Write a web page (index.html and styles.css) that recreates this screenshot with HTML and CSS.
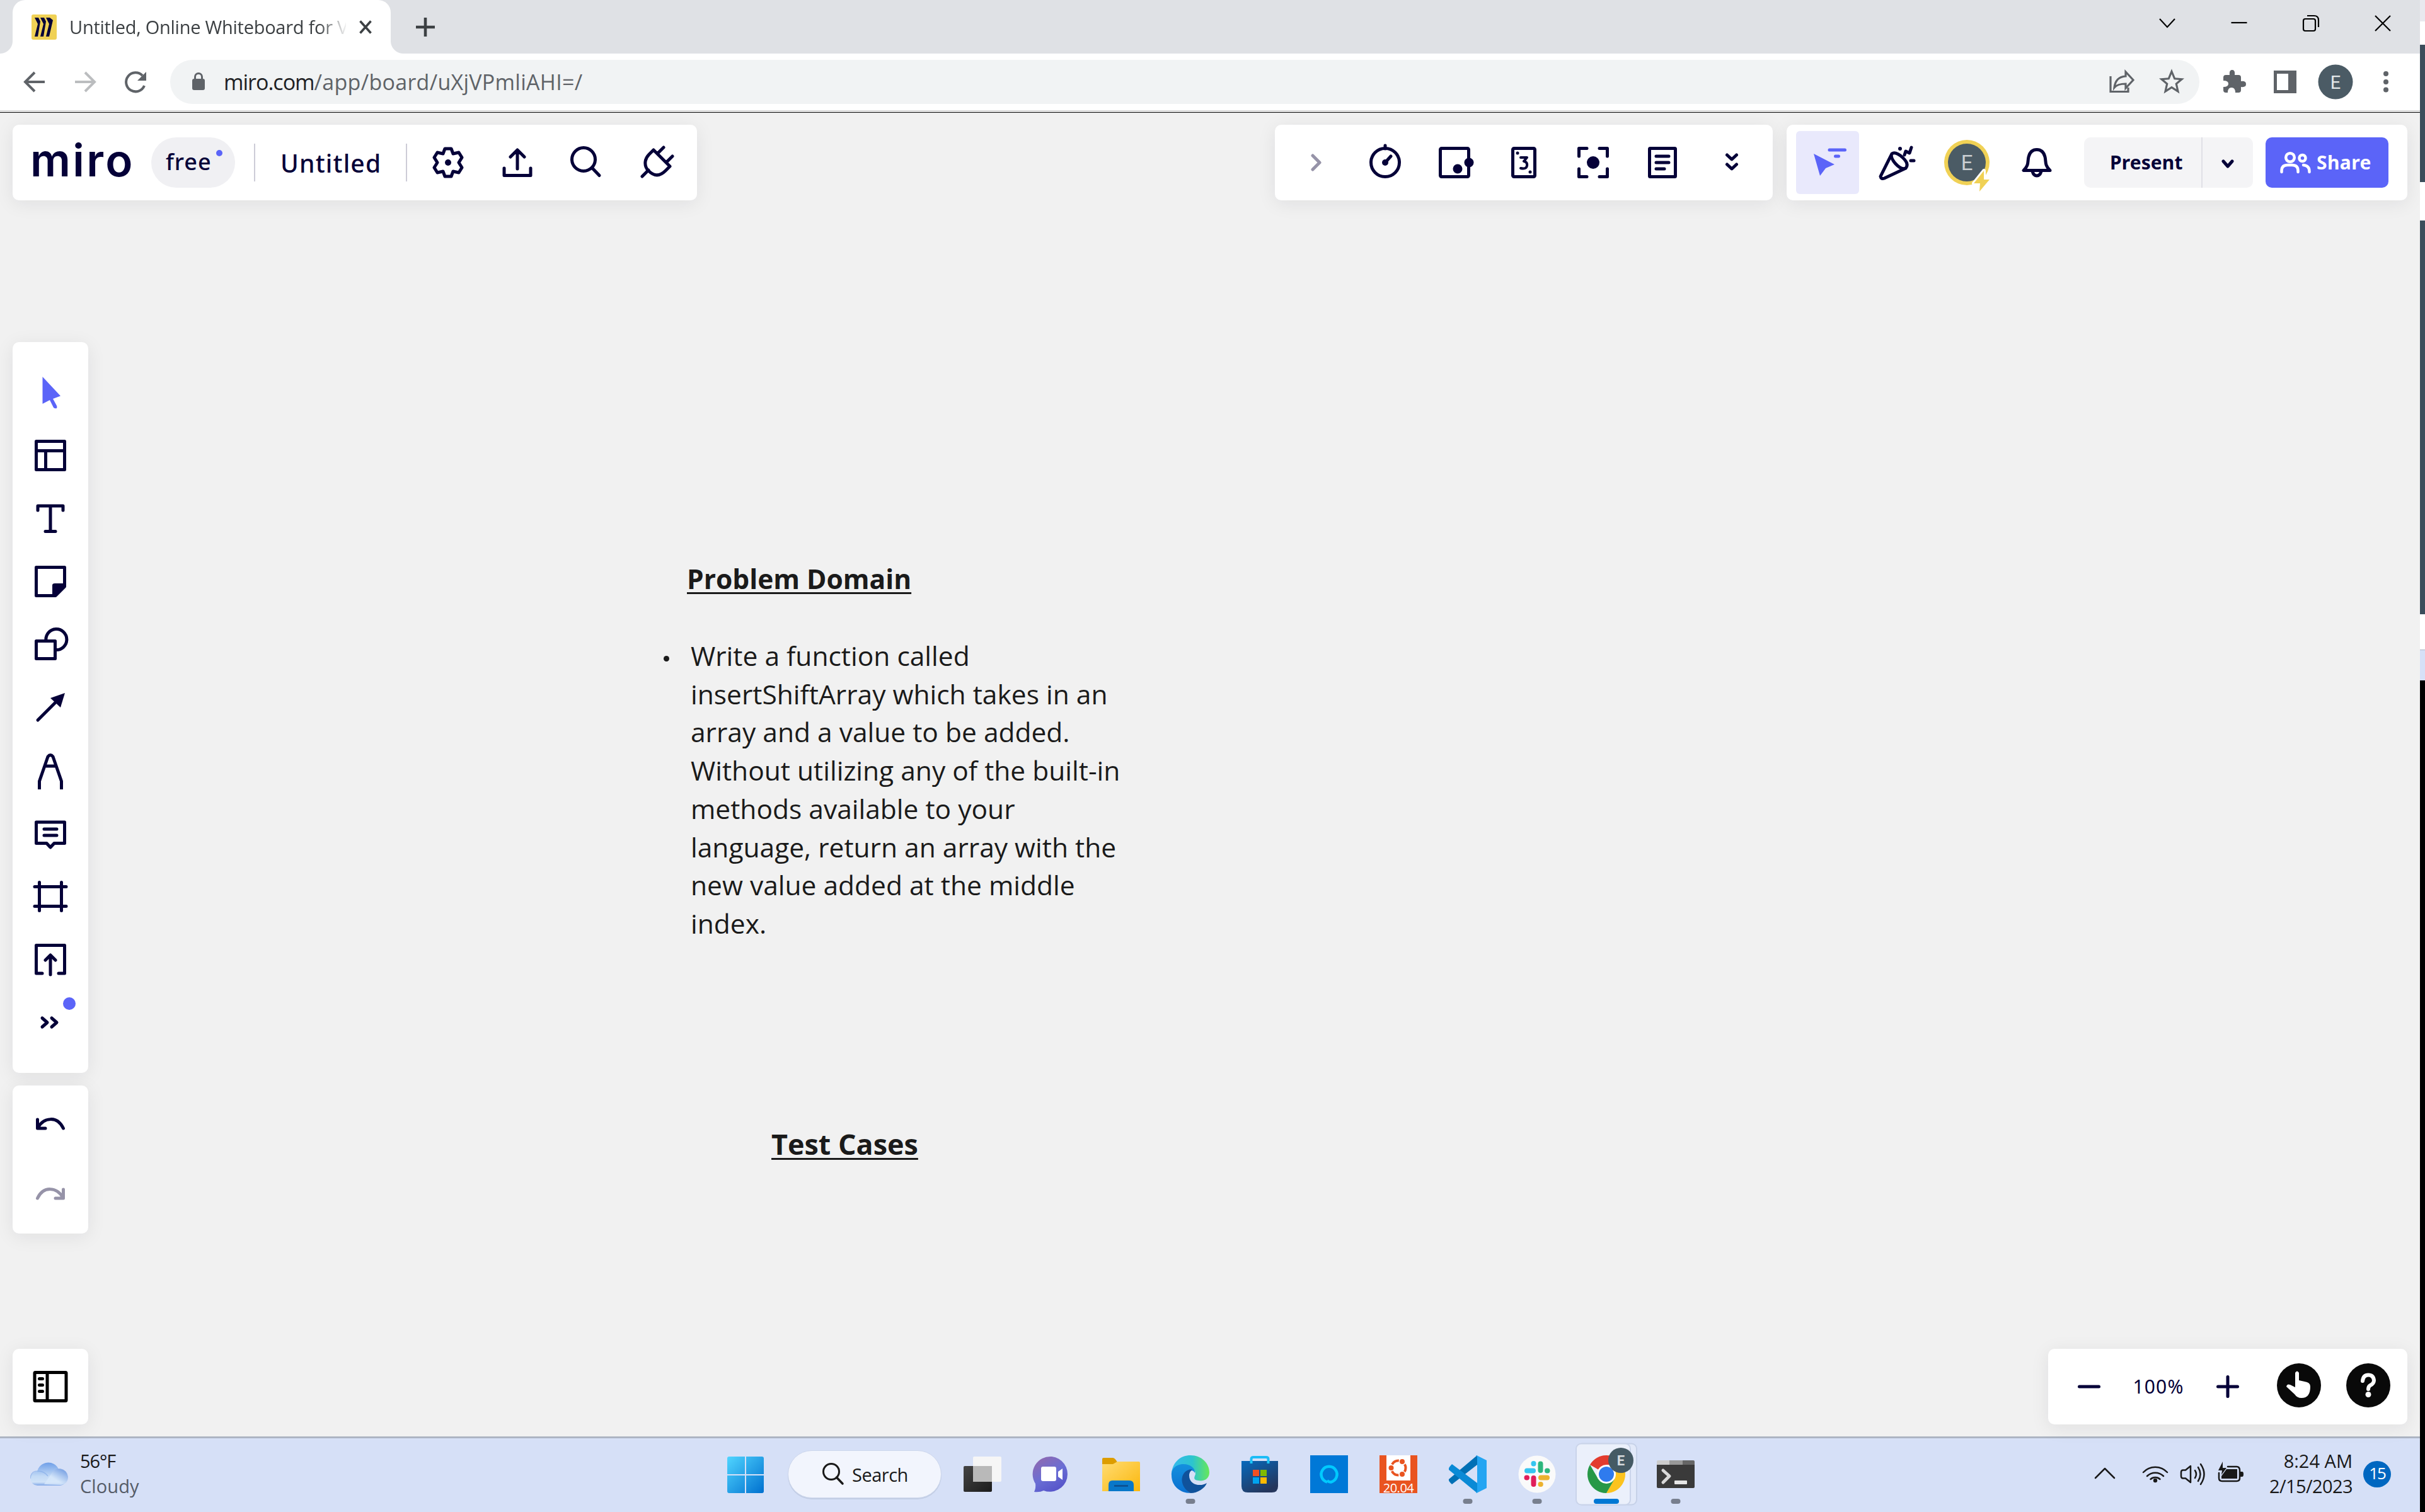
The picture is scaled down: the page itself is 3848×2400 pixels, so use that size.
FILE: index.html
```
<!DOCTYPE html>
<html lang="en">
<head>
<meta charset="utf-8">
<title>Untitled, Online Whiteboard for Visual Collaboration</title>
<link rel="stylesheet" href="styles.css">
</head>
<body>
<div class="desktop">
<main class="screen">

<header class="tabbar">
  <div class="tab">
    <svg class="favicon" viewBox="0 0 40 40"><rect width="40" height="40" rx="3" fill="#f0d155"/><path d="M5 5h6l3 6-4 24H5l5-20zM14 5h6l3 6-4 24h-5l5-20zM23 5h6l5 4-6 26h-5l5-20z" fill="#050038"/></svg>
    <span class="tab-title">Untitled, Online Whiteboard for V</span>
    <svg class="tab-close" viewBox="-12 -12 24 24"><path d="M-8.500-9.500 8.500 9.500M8.500-9.500-8.500 9.500" stroke="#3c4043" stroke-width="3.600"/></svg>
  </div>
  <svg class="new-tab" viewBox="-20 -20 40 40"><path d="M-15 0H15M0-15V15" stroke="#3c4043" stroke-width="4.600"/></svg>
  <div class="win-controls">
    <svg viewBox="-57 -42 114 84"><path d="M-12-7 0 6 12-7"/></svg>
    <svg viewBox="-57 -42 114 84"><path d="M-12.500-1H12.500"/></svg>
    <svg viewBox="-57 -42 114 84"><rect x="-12" y="-7" width="19" height="19" rx="3"/><path d="M-6-12H5q7 0 7 7V6"/></svg>
    <svg viewBox="-57 -42 114 84"><path d="M-12-12 12 12M12-12-12 12"/></svg>
  </div>
</header>

<nav class="toolbar">
  <svg class="nav-btn" viewBox="-40 -40 80 80"><path d="M16 0H-14M0-15-15 0 0 15" class="g"/></svg>
  <svg class="nav-btn" viewBox="-40 -40 80 80"><path d="M-16 0H14M0-15 15 0 0 15" class="g faint"/></svg>
  <svg class="nav-btn" viewBox="-40 -40 80 80"><path d="M14 6A15 15 0 1 1 11-10" class="g"/><path d="M17-16V-2H3z" fill="#5f6368"/></svg>
  <div class="omnibox">
    <svg class="lock" viewBox="-12 -16 24 32"><rect x="-10" y="-5" width="20" height="18" rx="3" fill="#5f6368"/><path d="M-5.500-5v-3a5.500 5.500 0 0 1 11 0v3" fill="none" stroke="#5f6368" stroke-width="3"/></svg>
    <span class="url"><span class="host">miro.com</span><span class="path">/app/board/uXjVPmliAHI=/</span></span>
    <svg class="omni-ic" viewBox="-40 -35 80 70"><path d="M-17-9V15.500H11V9" class="g thin"/><path d="M7-16 19-3 7 10V3Q-6 3-11 9-9-8 7-9z" class="g thin"/></svg>
    <svg class="omni-ic" viewBox="-40 -35 80 70"><path d="M0-16.500 4.700-5.200 16-4.300 7.300 3 10 15 0 8.700-10 15-7.300 3-16-4.300-4.700-5.200z" class="g thin"/></svg>
  </div>
  <svg class="ext" viewBox="-40 -40 80 80"><path d="M-18-7q0-4 4-4h6q-1-8 4-8t4 8h6q4 0 4 4v6q8-1 8 4.500t-8 4.500v5q0 4-4 4h-5q0-8-6-8t-6 8h-3q-4 0-4-4V8q8 0 8-5t-8-5z" fill="#5f6368"/></svg>
  <svg class="ext" viewBox="-40 -40 80 80"><path fill-rule="evenodd" d="M-18-18H18V18H-18zM-13-13V13H5V-13z" fill="#5f6368"/></svg>
  <svg class="ext" viewBox="-40 -40 80 80"><circle r="27.500" fill="#4b5b65"/><text y="10.500" class="initial">E</text></svg>
  <svg class="ext" viewBox="-40 -40 80 80"><g fill="#5f6368"><circle cy="-13" r="4"/><circle r="4"/><circle cy="12.500" r="4"/></g></svg>
</nav>

<section class="board">
  <div class="bar">
    <div class="panel file-panel">
      <span class="logo">miro</span>
      <span class="plan">free<i class="plan-dot"></i></span>
      <i class="divider"></i>
      <span class="board-name">Untitled</span>
      <i class="divider"></i>
      <svg class="slot" viewBox="-55 -60 110 120"><path d="M-5-22H5L8-14 17-16 22-8 17 0 22 8 17 16 8 14 5 22H-5L-8 14-17 16-22 8-17 0-22-8-17-16-8-14z" class="k"/><circle r="5" class="f"/></svg>
      <svg class="slot" viewBox="-55 -60 110 120"><path d="M-21 9V20.500H21V9M0 10V-19M-11-9 0-20 11-9" class="k"/></svg>
      <svg class="slot" viewBox="-55 -60 110 120"><circle cx="-5" cy="-5" r="18.500" class="k"/><path d="M8.500 8.500 20 20.500" class="k"/></svg>
      <svg class="slot" viewBox="-55 -60 110 120"><path d="M-4-20 22 6 15 13C4 24-5 20-12 13S-19-5-11-13zM12-24 3-15M26-10 17-1M-22 22-12 12" class="k"/></svg>
    </div>

    <div class="panel apps-panel">
      <svg class="slot" viewBox="-55 -60 110 120"><path d="M-5-11 6 0-5 11" class="k muted"/></svg>
      <svg class="slot" viewBox="-55 -60 110 120"><circle r="22.500" class="k"/><circle r="5" class="f"/><path d="M0-22V-27M0 0 9-10" class="k"/></svg>
      <svg class="slot" viewBox="-55 -60 110 120"><rect x="-22.500" y="-22.500" width="45" height="45" rx="2" class="k"/><circle cx="5" cy="10" r="7.500" class="f"/><circle cx="23" r="7.500" class="f"/></svg>
      <svg class="slot" viewBox="-55 -60 110 120"><rect x="-17.500" y="-22.500" width="35" height="45" rx="2" class="k"/><circle cx="-10" cy="-15" r="2.500" class="f"/><circle cx="10" cy="15" r="2.500" class="f"/><path d="M-5-8H5L0-2Q6-1 5 5T-5 9" class="k narrow"/></svg>
      <svg class="slot" viewBox="-55 -60 110 120"><path d="M-10-22.500H-22.500V-10M10-22.500H22.500V-10M-10 22.500H-22.500V10M10 22.500H22.500V10" class="k"/><circle r="10" class="f"/></svg>
      <svg class="slot" viewBox="-55 -60 110 120"><rect x="-20.500" y="-22.500" width="41" height="45" rx="1" class="k"/><path d="M-10-10H10M-10 0H10M-10 10H3" class="k"/></svg>
      <svg class="slot" viewBox="-55 -60 110 120"><path d="M-7.500-12 0-5 7.500-12M-7.500 3 0 10 7.500 3" class="k"/></svg>
    </div>

    <div class="panel share-panel">
      <svg class="follow" viewBox="-50 -50 100 100"><path d="M-22-14 11 3-3 9-12 21z" fill="#5b64f8"/><path d="M3-20H27.500M12.500-10H17.500" stroke="#5b64f8" stroke-width="5" stroke-linecap="round"/></svg>
      <svg class="slot" viewBox="-55 -60 110 120"><path d="M-8-14-26 22Q-25 27-20 25L14 9M-8-14Q-2-18 9-8T14 9Q7 12-2 2T-8-14M12-12 14-18 20-15 23-24M22-3H27" class="k"/><circle cx="5" cy="-22" r="3" class="f"/></svg>
      <svg class="slot" viewBox="-56 -60 110 120"><circle r="36" fill="#f0d155"/><circle r="30" fill="#4b5b65"/><text y="12" class="initial big">E</text><path d="M27 13 11 33H21L20 46 36 27H27z" fill="#f0d155" stroke="#fff" stroke-width="6" paint-order="stroke" stroke-linejoin="round"/></svg>
      <svg class="slot" viewBox="-57 -60 110 120"><path d="M-21 12.500H21C12 4 15-1 13-9 11-17 7-20.500 0-20.500S-11-17-13-9C-15-1-12 4-21 12.500z" class="k"/><path d="M-7 14Q-5 21 0 21T7 14" class="k"/></svg>
      <div class="present"><span class="present-label">Present</span><svg class="present-more" viewBox="-40 -40 80 80"><path d="M-7-4 0 4 7-4" class="k"/></svg></div>
      <div class="share"><svg class="people" viewBox="0 0 50 36"><g fill="none" stroke="#fff" stroke-width="4.500" stroke-linecap="round"><circle cx="16" cy="10" r="6.800"/><path d="M2.500 33V31Q2.500 22 12 22H19Q28.500 22 28.500 31V33"/><circle cx="35.500" cy="11" r="5"/><path d="M37 22q9.500 1 9.500 10v1"/></g></svg><span>Share</span></div>
    </div>
  </div>

  <div class="panel tools">
    <svg class="tool" viewBox="-60 -50 120 100"><path d="M-12.500-25V18L-1 12 5 24Q7 26 10 25 11 23 10 21L4 10 16 5.500z" fill="#5b64f8"/></svg>
    <svg class="tool" viewBox="-60 -50 120 100"><path d="M-22.500-22.500H22.500V22.500H-22.500zM-22.500-7.500H22.500M-7.500-7.500V22.500" class="k"/></svg>
    <svg class="tool" viewBox="-60 -50 120 100"><path d="M-20-13V-20H20V-13M0-20V20M-8 20.500H8" class="k"/></svg>
    <svg class="tool" viewBox="-60 -50 120 100"><path d="M22.500 8V-22.500H-22.500V22.500H8z" class="k"/><path d="M24 8 8 24H3V6Q3 3 7 3H24z" class="f"/></svg>
    <svg class="tool" viewBox="-60 -50 120 100"><rect x="-22.500" y="-5.500" width="30" height="28" class="k"/><path d="M-7-6A16.500 16.500 0 1 1 8 8.500" class="k"/></svg>
    <svg class="tool" viewBox="-60 -50 120 100"><path d="M-20 20 11-11" class="k"/><path d="M23-23 16 0 0-15z" class="f"/></svg>
    <svg class="tool" viewBox="-60 -51 120 100"><path d="M-17.500 29V16L-4-23Q0-28 4-23L17.500 16V29M-9-8H9" class="k butt"/></svg>
    <svg class="tool" viewBox="-60 -52 120 100"><path d="M-22.500-20H22.500V13.500H6L0 20-6 13.500H-22.500zM-10-9H10M-10 1H10" class="k"/></svg>
    <svg class="tool" viewBox="-60 -50 120 100"><path d="M-25-15.500H25M-25 15.500H25M-17.500-22.500V22.500M17.500-22.500V22.500" class="k"/></svg>
    <svg class="tool" viewBox="-60 -50 120 100"><path d="M-13 22H-22.500V-22.500H22.500V22H13M0 24V-6M-8 1 0-7 8 1" class="k"/></svg>
    <svg class="tool" viewBox="-60 -50 120 100"><path d="M-13-7-5 0-13 7M2-7 10 0 2 7" class="k"/><circle cx="30" cy="-30" r="10" fill="#5b64f8"/></svg>
  </div>

  <div class="panel history">
    <svg class="tool" viewBox="-60 -50 120 100"><path d="M-20.500-7V7H-8M-20 6C-10-11 11-13 20.500 7" class="k"/></svg>
    <svg class="tool" viewBox="-60 -50 120 100"><path d="M20.500-7V7H8M20 6C10-11-11-13-20.500 7" class="k muted"/></svg>
  </div>

  <div class="bar bottom-bar">
    <div class="panel frames"><svg class="tool" viewBox="-60 -60 120 120"><g fill="none" stroke="#000" stroke-width="5" stroke-linecap="round"><rect x="-25" y="-22.500" width="50" height="45" rx="1"/><path d="M-5-22V22M-17.500-12.500H-12.500M-17.500-2.500H-12.500M-17.500 7.500H-12.500"/></g></svg></div>
    <div class="panel zoom">
      <svg class="slot" viewBox="-55 -60 110 120"><path d="M-15.500 0H15.500" class="k"/></svg>
      <span class="zoom-value">100%</span>
      <svg class="slot" viewBox="-55 -60 110 120"><path d="M-15.500 0H15.500M0-15.500V15.500" class="k"/></svg>
      <svg class="slot round" viewBox="-55 -60 110 120"><g transform="translate(0 -2)"><circle r="35" fill="#090909"/><path d="M-6-20Q-3-25 0-20V-8L9-6Q18-5 18 2 18 20 4 20-3 20-7 14L-20 2Q-19-3-14-1L-6 3z" fill="#fff"/></g></svg>
      <svg class="slot round" viewBox="-55 -60 110 120"><g transform="translate(0 -2)"><circle r="35" fill="#090909"/><path d="M-9-7Q-8-16.500 0-16.500T9-8Q9-3 3 0 0 2 0 6" fill="none" stroke="#fff" stroke-width="6" stroke-linecap="round"/><circle cy="14.500" r="4.500" fill="#fff"/></g></svg>
    </div>
  </div>

  <h2 class="note problem-title">Problem Domain</h2>
  <div class="note problem"><i class="bullet"></i><p>Write a function called<br>insertShiftArray which takes in an<br>array and a value to be added.<br>Without utilizing any of the built-in<br>methods available to your<br>language, return an array with the<br>new value added at the middle<br>index.</p></div>
  <h2 class="note cases-title">Test Cases</h2>
</section>

<footer class="taskbar">
  <div class="weather">
    <svg class="cloud" viewBox="0 0 60 40"><defs><linearGradient id="cl" x2="0" y2="1"><stop offset="0" stop-color="#6f9fe8"/><stop offset=".6" stop-color="#c4dbf6"/><stop offset=".85" stop-color="#cfe2f8"/><stop offset="1" stop-color="#7ea5e6"/></linearGradient><linearGradient id="cr" x1="1" x2="0" y2="1"><stop offset="0" stop-color="#5283d8"/><stop offset=".6" stop-color="#d9e9fb"/></linearGradient></defs><path d="M12 38A11 11 0 0 1 11 16 18 18 0 0 1 45 12 13 13 0 0 1 47 38z" fill="url(#cl)"/><path d="M33 20A14 14 0 0 1 60 24Q60 36 48 37L22 36z" fill="url(#cr)" opacity=".75"/><path d="M0 27Q1 15 12 15 22 15 28 23" fill="none" stroke="#86aeea" stroke-width="1.500" opacity=".7"/></svg>
    <div class="weather-text"><span class="temp">56°F</span><span class="sky">Cloudy</span></div>
  </div>

  <div class="apps">
    <svg class="app" viewBox="-55 -55 110 110"><defs><linearGradient id="win" x2="1" y2="1"><stop offset="0" stop-color="#50d5ff"/><stop offset="1" stop-color="#0070cf"/></linearGradient></defs><path d="M-26-28H-1V0H-29V-25Q-29-28-26-28zM1-28H26Q29-28 29-25V0H1zM-29 2H-1V30H-26Q-29 30-29 27zM1 2H29V27Q29 30 26 30H1z" fill="url(#win)"/></svg>
    <div class="search"><svg class="search-ic" viewBox="0 0 36 36"><circle cx="15" cy="14" r="12.500" fill="none" stroke="#191919" stroke-width="3"/><path d="M23.500 23 33 33" stroke="#191919" stroke-width="3.500" stroke-linecap="round"/></svg><span>Search</span></div>
    <svg class="app" viewBox="-55 -55 110 110"><defs><linearGradient id="tv" x2="1" y2="1"><stop offset="0" stop-color="#444"/><stop offset="1" stop-color="#1c1c1c"/></linearGradient></defs><rect x="-30" y="-13" width="45" height="41" rx="2" fill="url(#tv)"/><rect x="-15" y="-28" width="45" height="40" rx="2" fill="#f6f6f6"/><path d="M-15-13H15V12H-15z" fill="#b9b9b9"/></svg>
    <svg class="app" viewBox="-55 -55 110 110"><defs><linearGradient id="ch" x1=".2" x2=".8" y2="1"><stop offset="0" stop-color="#9069b0"/><stop offset=".5" stop-color="#6a6ed4"/><stop offset="1" stop-color="#5350c8"/></linearGradient></defs><path d="M0-28A28 28 0 1 1-13 26Q-19 29-28 28-25 22-26 15A28 28 0 0 1 0-28z" fill="url(#ch)"/><rect x="-17" y="-12" width="24" height="23" rx="3" fill="#fff"/><path d="M10-4 17-9V9L10 4z" fill="#fff"/></svg>
    <svg class="app" viewBox="-55 -55 110 110"><defs><linearGradient id="fo" x2="1" y2="1"><stop offset="0" stop-color="#ffdc73"/><stop offset="1" stop-color="#fbb70c"/></linearGradient></defs><path d="M-30-24Q-30-26-28-26H-13Q-10-26-6-19V-10H-30z" fill="#dd9d00"/><path d="M-30-16H-13L-6-20H28Q30-20 30-18V27H-30z" fill="url(#fo)"/><path d="M-20 27V17Q-20 10-14 10H13Q20 10 20 17V27z" fill="#0877c9"/><path d="M-11 18.500H11" stroke="#0b4c8c" stroke-width="2.500"/></svg>
    <svg class="app" viewBox="-55 -55 110 110"><defs><linearGradient id="ed" x2="1"><stop offset="0" stop-color="#35b9ee"/><stop offset=".55" stop-color="#2cc4cf"/><stop offset="1" stop-color="#67e858"/></linearGradient><linearGradient id="eb" x2="0" y2="1"><stop offset="0" stop-color="#1490de"/><stop offset="1" stop-color="#0a6fd0"/></linearGradient></defs><path d="M-30-2C-28-20-15-30 0-30 18-30 30-17 30-3 30 7 22 12 12 10 4 9 6 5 8 0 8-8 0-14-10-15-20-16-27-9-30-2z" fill="url(#ed)"/><path d="M-30 2C-31-9-22-16-11-16 0-16 8-9 7-2 4-9-8-7-12 4-15 15-5 27 0 30-17 30-30 18-30 2z" fill="url(#eb)"/><path d="M-5-6C-17 0-17 20 0 30 12 30 23 22 26 14 17 20-2 18-2 2-2-3 1-6 3-7 0-8-3-7-5-6z" fill="#10529b"/><rect x="-7.500" y="39" width="15" height="8" rx="4" class="run"/></svg>
    <svg class="app" viewBox="-55 -55 110 110"><defs><linearGradient id="st" x2=".6" y2="1"><stop offset="0" stop-color="#0669bd"/><stop offset="1" stop-color="#25365c"/></linearGradient></defs><path d="M-13.500-12V-24Q-13.500-27 -10-27H10Q13.500-27 13.500-24V-12" fill="none" stroke="#1cbdf6" stroke-width="4"/><path d="M-29-21H29V19Q29 29 19 29H-19Q-29 29-29 19z" fill="url(#st)"/><path d="M-13.500-17V-21M13.500-17V-21" stroke="#1cc8fa" stroke-width="4"/><path d="M-11-7H-1V3H-11z" fill="#f25022"/><path d="M1-7H11V3H1z" fill="#7fba00"/><path d="M-11 5H-1V15H-11z" fill="#00a4ef"/><path d="M1 5H11V15H1z" fill="#ffb900"/></svg>
    <svg class="app" viewBox="-55 -55 110 110"><path d="M-30-30H30V30H-30z" fill="#0078d7"/><path d="M-3 12.500A12.500 12.500 0 1 1 3 12.500Q0 13-3 10" fill="none" stroke="#00caff" stroke-width="4.500"/></svg>
    <svg class="app" viewBox="-55 -55 110 110"><path d="M-30-30H30V30H-30z" fill="#e95420"/><path d="M-19-30H19V10H-19z" fill="#fff"/><circle cy="-10" r="11.500" fill="none" stroke="#e95420" stroke-width="4" stroke-dasharray="13 11.085" stroke-dashoffset="6.500"/><g fill="#e95420"><circle cx="-11.500" cy="-10" r="4"/><circle cx="6" cy="-20" r="4"/><circle cx="6" cy="0" r="4"/></g><text y="28.500" class="release">20.04</text></svg>
    <svg class="app" viewBox="-55 -55 110 110"><path d="M-30 8Q-31 11-25 16L15-15V-30L-30 8z" fill="#0070b5"/><path d="M-30-9Q-30-11-25-16L15 14V30L-30-7z" fill="#0a8ad6"/><path d="M14-30 30-22V22L14 30 13 29Q15 28 15 26V-26Q15-29 13-30z" fill="#24a5f2"/><rect x="-7.500" y="39" width="15" height="8" rx="4" class="run"/></svg>
    <svg class="app" viewBox="-55 -55 110 110"><circle r="29.500" fill="#fafafa"/><g stroke-width="8" stroke-linecap="round"><path d="M-16-5.500H-6M-5.500-16.500V-17" stroke="#36c5f0"/><path d="M5.500-16.500V-6M16-5.500H16.500" stroke="#2eb67d"/><path d="M6 5.500H16M5.500 16H5.800" stroke="#ecb22e"/><path d="M-5.500 6V16M-16 5.500H-16.500" stroke="#e01e5a"/></g><rect x="-7.500" y="39" width="15" height="8" rx="4" class="run"/></svg>
    <svg class="app" viewBox="-55 -55 110 110"><rect x="-46" y="-48.500" width="94" height="97" rx="8" fill="#e2e9f9" stroke="#c6d1e8" stroke-width="2"/><rect x="-48" y="-48.500" width="86" height="97" rx="8" fill="#ebf0fb" stroke="#cad4ea" stroke-width="2"/><path d="M0 0-26-15A30 30 0 0 1 26-15H0z" fill="#e33b2e"/><path d="M0 0 26-15A30 30 0 0 1 0 30L13 7z" fill="#fcc31e"/><path d="M-26-15A30 30 0 0 0 0 30L13 7.500-13 7.500z" fill="#279847"/><circle r="15" fill="#fff"/><circle r="12" fill="#2f7bee"/><circle cx="23" cy="-22" r="20" fill="#455a64"/><text x="23" y="-14" class="badge-letter">E</text><rect x="-20" y="39" width="40" height="8" rx="4" fill="#0078d4"/></svg>
    <svg class="app" viewBox="-55 -55 110 110"><path d="M-30-20Q-30-22-28-22H-9V-15H-30z" fill="#ccc"/><path d="M-10-22H11V-15H-10z" fill="#999"/><path d="M11-22H28Q30-22 30-20V-15H11z" fill="#666"/><path d="M-30-15H30V20Q30 22 28 22H-28Q-30 22-30 20z" fill="#3a3a3a"/><path d="M-20-6-10 3-20 13" fill="none" stroke="#d8d8d8" stroke-width="5" stroke-linejoin="round" stroke-linecap="round"/><rect x="-2" y="10" width="20" height="6" rx="1" fill="#e6e6e6"/><rect x="-7.500" y="39" width="15" height="8" rx="4" class="run"/></svg>
  </div>

  <div class="tray">
    <svg class="tray-up" viewBox="-20 -20 40 40"><path d="M-15 6 0-9 15 6" class="t"/></svg>
    <svg class="tray-ic" viewBox="-30 -30 60 60"><path d="M-19-3A26 26 0 0 1 19-3M-13 3A18.500 18.500 0 0 1 13 3M-7.500 8A11 11 0 0 1 7.500 8" class="t"/><circle cy="10" r="3.200" fill="#191919"/></svg>
    <svg class="tray-ic" viewBox="-30 -30 60 60"><path d="M-4-13V13L-12 6.500H-16Q-19 6.500-19 3V-3Q-19-6.500-16-6.500H-12zM3-6Q7 0 3 6M8-11Q15 0 8 11M12-16Q23 0 12 16" class="t"/></svg>
    <svg class="tray-ic" viewBox="-30 -30 60 60"><path d="M-19-2V6Q-19 11-14 11H9Q14 11 14 6V-6Q14-12 9-12H-5" class="t"/><path d="M-7-8H10V7H-15V3zM15-4H18Q20-4 20 0T18 4H15zM-13-20-20-6H-14L-15 1-7-10H-13z" fill="#191919"/></svg>
    <div class="clock"><span class="time">8:24 AM</span><span class="date">2/15/2023</span></div>
    <span class="notif">15</span>
  </div>
</footer>
</main>

<aside class="edge"><i class="e1"></i><i class="e2"></i><i class="e3"></i><i class="e2b"></i><i class="e4"></i><i class="e5"></i><i class="e6"></i></aside>
</div>
</body>
</html>
```
FILE: styles.css
```
* { box-sizing: border-box; }
body { margin: 0; font-family: "Open Sans", "Noto Sans", sans-serif; }
svg { display: block; flex: none; }
.desktop { display: flex; width: 3848px; height: 2400px; overflow: hidden; }
.screen { width: 3840px; height: 2400px; display: flex; flex-direction: column; }

/* Browser chrome */
.tabbar { height: 85px; flex: none; background: #dfe1e5; display: flex; align-items: center; }
.tab { position: relative; width: 600px; height: 85px; margin-left: 20px; background: #fff; border-radius: 20px 20px 0 0; display: flex; align-items: center; padding-left: 30px; }
.tab::before, .tab::after { content: ""; position: absolute; bottom: 0; width: 20px; height: 20px; }
.tab::before { left: -20px; background: radial-gradient(circle at 0 0, transparent 19.5px, #fff 20.5px); }
.tab::after { right: -20px; background: radial-gradient(circle at 100% 0, transparent 19.5px, #fff 20.5px); }
.favicon { width: 40px; height: 40px; }
.tab-title { width: 439px; margin-left: 20px; overflow: hidden; white-space: nowrap; font-size: 29px; line-height: 44px; letter-spacing: -.26px; color: #3c4043; -webkit-mask-image: linear-gradient(90deg, #000 395px, transparent 442px); mask-image: linear-gradient(90deg, #000 395px, transparent 442px); }
.tab-close { width: 24px; height: 24px; margin-left: 19px; }
.new-tab { width: 40px; height: 40px; margin-left: 35px; }
.win-controls { display: flex; margin: 0 2px 11px auto; height: 73px; align-items: center; }
.win-controls svg { width: 114px; height: 84px; fill: none; stroke: #000; stroke-width: 2.2; }
.toolbar { height: 94px; flex: none; background: #fff; border-bottom: 1px solid #111; box-shadow: inset 0 -3px #dcdcdc; display: flex; align-items: center; padding: 0 14px 4px 15px; }
.nav-btn { width: 80px; height: 80px; }
.g { fill: none; stroke: #5f6368; stroke-width: 4; }
.thin { stroke-width: 3.2; }
.faint { stroke: #bbbdbf; }
.omnibox { width: 3220px; height: 70px; margin-left: 15px; border-radius: 35px; background: #f1f3f4; display: flex; align-items: center; padding-left: 33px; }
.lock { width: 24px; height: 32px; }
.url { margin-left: 28px; font-size: 34px; line-height: 50px; color: #5f6368; white-space: nowrap; }
.host { color: #202124; letter-spacing: -1px; }
.path { letter-spacing: .28px; }
.omni-ic { width: 80px; height: 70px; }
.url + .omni-ic { margin-left: auto; }
.omni-ic:last-child { margin-right: 4px; }
.ext { width: 80px; height: 80px; }
.omnibox + .ext { margin-left: 16px; }
.initial { font: 400 29px Roboto, sans-serif; fill: #e4e8ea; text-anchor: middle; }
.big { font-size: 33px; fill: #c9ced2; }

/* Whiteboard */
.board { position: relative; height: 2101px; flex: none; background: #f1f1f1; padding-top: 19px; }
.bar { display: flex; padding: 0 20px; }
.panel { background: #fff; border-radius: 10px; box-shadow: 0 5px 30px rgba(20, 20, 40, .08); display: flex; align-items: center; flex: none; }
.k { fill: none; stroke: #050038; stroke-width: 5; stroke-linecap: round; stroke-linejoin: round; }
.narrow { stroke-width: 4; }
.butt { stroke-linecap: butt; }
.muted { stroke: #9693a8; }
.f { fill: #050038; }
.slot { width: 110px; height: 120px; }
.file-panel { width: 1086px; height: 120px; }
.logo { width: 172px; margin-left: 28px; padding-bottom: 9px; font: 600 71px/90px Inter, sans-serif; letter-spacing: 3.4px; color: #050038; white-space: nowrap; }
.plan { position: relative; width: 133px; height: 80px; margin-left: 20px; border-radius: 40px; background: #f0f0f3; font: 500 36px/77px "Noto Sans", sans-serif; letter-spacing: 1px; color: #050038; padding-left: 23px; }
.plan-dot { position: absolute; left: 103px; top: 20px; width: 10px; height: 10px; border-radius: 50%; background: #5b64f8; }
.divider { width: 2px; height: 60px; background: #cdccd7; flex: none; }
.plan + .divider { margin-left: 30px; }
.board-name { width: 199px; margin: 2px 0 0 40px; font: 500 39px/60px "Noto Sans", sans-serif; letter-spacing: 1.2px; color: #050038; }
.board-name + .divider { margin-right: 10px; }
.apps-panel { width: 790px; height: 120px; margin-left: auto; padding: 0 10px; }
.share-panel { width: 985px; height: 120px; margin-left: 22px; padding-left: 15px; }
.follow { width: 100px; height: 100px; border-radius: 6px; background: #e9e9fc; margin-right: 5px; }
.present { display: flex; width: 268px; height: 80px; margin-left: 22px; border-radius: 10px; background: #f4f4f6; color: #050038; font: 700 30px/80px "Noto Sans", sans-serif; letter-spacing: .1px; }
.present-label { width: 188px; padding-left: 41px; border-right: 2px solid #e0e0e6; }
.present-more { width: 80px; height: 80px; margin-top: 2px; }
.share { display: flex; align-items: center; width: 195px; height: 80px; margin-left: 20px; border-radius: 10px; background: #5b64f8; color: #fff; font: 700 30px/80px "Noto Sans", sans-serif; letter-spacing: .4px; padding-left: 23px; }
.people { width: 50px; height: 36px; margin-right: 8px; }
.tools { width: 120px; height: 1160px; flex-direction: column; margin: 225px 0 0 20px; padding: 30px 0; }
.tool { width: 120px; height: 100px; }
.history { width: 120px; height: 235px; flex-direction: column; margin: 20px 0 0 20px; padding: 11px 0 0; gap: 11px; }
.bottom-bar { margin-top: 183px; justify-content: space-between; }
.frames { width: 120px; height: 120px; }
.frames .tool { height: 120px; }
.zoom { width: 570px; height: 120px; padding-left: 10px; }
.zoom-value { width: 110px; text-align: center; font: 400 30px/40px "Noto Sans", sans-serif; letter-spacing: 1.2px; color: #050038; }
.round { position: relative; left: 3px; }

/* Text placed freely on the canvas */
.note { position: absolute; margin: 0; color: #1a1a1a; white-space: nowrap; }
.problem-title, .cases-title { font-weight: 700; text-decoration: underline; text-decoration-thickness: 3px; line-height: 60px; }
.problem-title { left: 1090px; top: 710px; font-size: 42.5px; text-underline-offset: 5px; }
.cases-title { left: 1224px; top: 1607px; font-size: 44.9px; text-underline-offset: 5px; }
.problem { left: 1053px; top: 832px; display: flex; font-size: 42.5px; line-height: 60.7px; }
.problem p { margin: 0 0 0 34px; }
.bullet { width: 9px; height: 9px; border-radius: 50%; background: #1a1a1a; margin-top: 30px; }

/* Taskbar */
.taskbar { height: 120px; flex: none; background: #d6e0f7; border-top: 3px solid #adb5c3; display: flex; align-items: center; padding-bottom: 3px; }
.weather { width: 1128px; display: flex; align-items: center; padding-left: 48px; color: #191919; font-size: 29px; line-height: 40px; }
.cloud { width: 60px; height: 40px; }
.weather-text { display: flex; flex-direction: column; margin: -2px 0 0 19px; }
.temp { letter-spacing: -1.1px; }
.sky { color: #555c68; letter-spacing: .1px; }
.apps { display: flex; align-items: center; }
.app { width: 110px; height: 110px; }
.run { fill: #787f8e; }
.search { display: flex; align-items: center; width: 244px; height: 76px; margin: 0 10px 0 12px; border-radius: 38px; background: #f2f5fd; border: 1px solid #ccd6ec; box-shadow: 0 2px #c3cee5; padding-left: 53px; font-size: 29px; letter-spacing: -.5px; color: #191919; }
.search-ic { width: 36px; height: 36px; margin-right: 12px; }
.release { font: 400 20px "Open Sans", sans-serif; fill: #fff; text-anchor: middle; letter-spacing: -.5px; }
.badge-letter { font: 700 22px Roboto, sans-serif; fill: #d6dbde; text-anchor: middle; }
.tray { display: flex; align-items: center; margin-left: auto; padding-right: 46px; color: #191919; }
.t { fill: none; stroke: #191919; stroke-width: 2.5; stroke-linecap: round; stroke-linejoin: round; }
.tray-up { width: 40px; height: 40px; margin-right: 30px; }
.tray-ic { width: 60px; height: 60px; }
.clock { display: flex; flex-direction: column; align-items: flex-end; width: 163px; margin: -2px 17px 0 0; font-size: 29px; line-height: 40px; white-space: nowrap; }
.date { letter-spacing: -.6px; }
.notif { width: 44px; height: 42px; border-radius: 50%; background: #0067c0; color: #fff; text-align: center; font-size: 26px; line-height: 39px; letter-spacing: -2px; }

/* Sliver of the neighbouring display */
.edge { display: flex; flex-direction: column; width: 8px; height: 2400px; }
.edge i { display: block; background: #fff; flex: none; }
.edge .e1 { height: 34px; background: #e9e9ef; }
.edge .e2 { height: 37px; }
.edge .e3 { height: 218px; background: #3b4d5b; }
.edge .e2b { height: 61px; }
.edge .e4 { height: 625px; background: #3b4d5b; }
.edge .e5 { height: 57px; border-bottom: 1px solid #adb5c3; }
.edge .e6 { height: 1368px; background: linear-gradient(#d6e0f7 48px, #000 48px); }
```
